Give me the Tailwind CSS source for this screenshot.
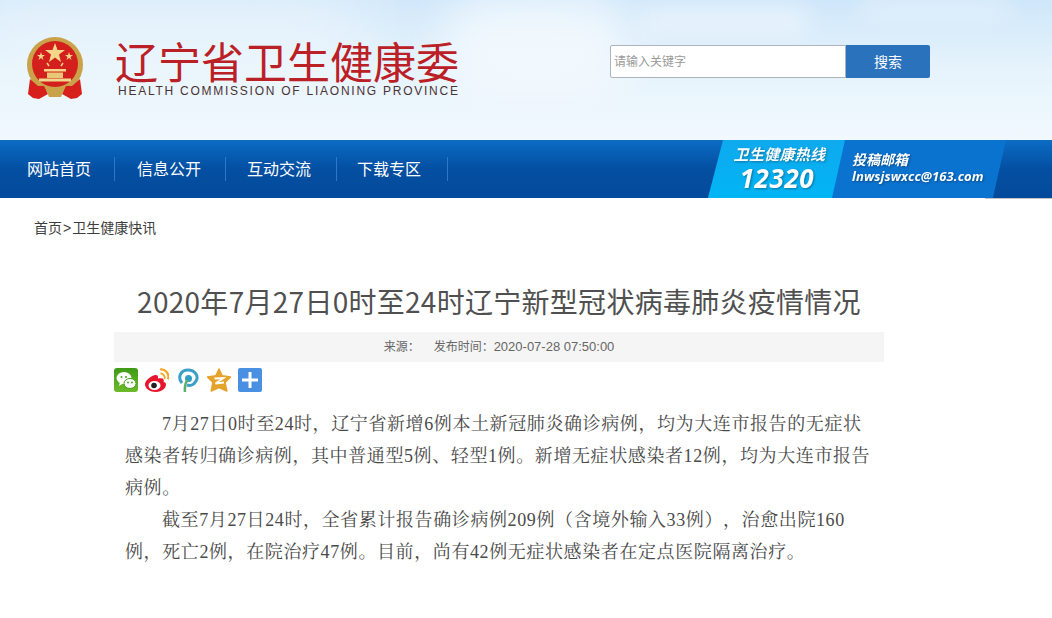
<!DOCTYPE html>
<html lang="zh">
<head>
<meta charset="utf-8">
<script src="https://cdn.jsdelivr.net/npm/@tailwindcss/browser@4"></script>
</head>
<body class="bg-white overflow-hidden font-['Liberation_Sans','Noto_Sans_CJK_SC',sans-serif]">
<div class="w-[1052px] h-[618px] flex flex-col">
  <header class="relative overflow-hidden h-[140px] shrink-0 bg-gradient-to-b from-[#cfe7fa] via-[#e6f3fc] to-[#f1f9fe] flex items-start">
    <div class="absolute left-[-40px] top-[-20px] w-[420px] h-[90px] rounded-full bg-white/45 blur-2xl"></div>
    <div class="absolute left-[440px] top-[-10px] w-[190px] h-[100px] rounded-full bg-white/60 blur-xl"></div>
    <div class="absolute left-[640px] top-[8px] w-[170px] h-[24px] rounded-full bg-white/50 blur-md"></div>
    <div class="absolute left-[860px] top-[0px] w-[150px] h-[18px] rounded-full bg-white/40 blur-md"></div>
    <svg class="relative w-[60px] h-[64px] ml-[25px] mt-[36px] shrink-0" viewBox="0 0 60 64">
      <circle cx="30" cy="29" r="28" fill="#c9a24a"/>
      <circle cx="30" cy="28" r="23" fill="#d3201c"/>
      <polygon points="30,7 32.500,14 40,14 34,18.500 36,26 30,21.500 24,26 26,18.500 20,14 27.500,14" fill="#f3d68a"/>
      <polygon points="16,16 17,19 20,19 17.500,21 18.500,24 16,22 13.500,24 14.500,21 12,19 15,19" fill="#f3d68a"/>
      <polygon points="44,16 45,19 48,19 45.500,21 46.500,24 44,22 41.500,24 42.500,21 40,19 43,19" fill="#f3d68a"/>
      <path d="M22 27 l2 3 M38 27 l-2 3" stroke="#f3d68a" stroke-width="1.500"/>
      <rect x="19" y="33" width="22" height="2.500" fill="#f3d68a"/>
      <rect x="22" y="36.500" width="16" height="5.500" fill="#e8c876"/>
      <rect x="14" y="42.500" width="32" height="3" fill="#f0d78e"/>
      <path d="M5 43 L13 50 L19 50 L23 58 L14 63 L8 62 L3 58 Z" fill="#d7201c"/>
      <path d="M55 43 L47 50 L41 50 L37 58 L46 63 L52 62 L57 58 Z" fill="#d7201c"/>
      <path d="M20 51 H40 L36 61 H24 Z" fill="#c9a24a"/>
    </svg>
    <div class="relative ml-[30px] mt-[37px] w-[346px] shrink-0">
      <div class="text-[43px] leading-[46px] text-[#bb2026] whitespace-nowrap font-['Noto_Sans_CJK_SC',sans-serif]">辽宁省卫生健康委</div>
      <div class="text-[12px] leading-[14px] mt-[1px] ml-[3px] text-[#4a3336] tracking-[1.75px] whitespace-nowrap">HEALTH COMMISSION OF LIAONING PROVINCE</div>
    </div>
    <div class="relative ml-[149px] mt-[45px] flex shrink-0">
      <div class="w-[236px] h-[33px] bg-white border border-[#adb4bc] rounded-l-[2px] text-[12px] leading-[33px] pl-[3px] text-[#9a9a9a]">请输入关键字</div>
      <div class="w-[84px] h-[33px] bg-[#2b72bd] rounded-r-[2px] text-white text-[14px] leading-[34px] text-center">搜索</div>
    </div>
  </header>

  <nav class="h-[58px] shrink-0 bg-gradient-to-b from-[#0c6cc4] via-[#044fa2] to-[#034a9b] relative flex items-center text-white text-[16px]">
    <div class="w-[115px] h-[24px] leading-[26px] border-r border-[#2d78c8] pl-[27px]">网站首页</div>
    <div class="w-[111px] h-[24px] leading-[26px] border-r border-[#2d78c8] pl-[22px]">信息公开</div>
    <div class="w-[111px] h-[24px] leading-[26px] border-r border-[#2d78c8] pl-[21px]">互动交流</div>
    <div class="w-[111px] h-[24px] leading-[26px] border-r border-[#2d78c8] pl-[20px]">下载专区</div>
    <div class="absolute left-[708px] top-0 w-[298px] h-[58px] bg-[#0a73d0] [clip-path:polygon(5%_0,100%_0,95.600%_100%,0_100%)]"></div>
    <div class="absolute left-[708px] top-0 w-[137px] h-[58px] bg-gradient-to-b from-[#0fa9ee] to-[#00b5f5] [clip-path:polygon(11%_0,100%_0,90.500%_100%,0_100%)] flex flex-col items-center pr-[8px] pl-[14px] italic">
      <div class="text-[15px] leading-[18px] mt-[6px] tracking-[.3px] whitespace-nowrap font-bold drop-shadow-[1px_1px_1px_rgba(0,0,0,.35)]">卫生健康热线</div>
      <div class="text-[26px] leading-[29px] -ml-[5px] font-bold tracking-[.6px] font-['Open_Sans',sans-serif] drop-shadow-[1px_1px_1px_rgba(0,0,0,.35)]">12320</div>
    </div>
    <div class="absolute left-[852px] top-[11px] italic font-bold drop-shadow-[1px_1px_1px_rgba(0,0,0,.35)]">
      <div class="text-[14px] leading-[18px]">投稿邮箱</div>
      <div class="text-[13px] leading-[14px] tracking-[.1px] font-['Open_Sans',sans-serif] whitespace-nowrap">lnwsjswxcc@163.com</div>
    </div>
    <div class="absolute left-[985px] top-full w-[67px] h-[1px] bg-[#c4c4c4]"></div>
  </nav>

  <div class="text-[14px] leading-[18px] text-[#3d3d3d] pl-[34px] pt-[21px] whitespace-nowrap">首页<span class="mx-[1px]">&gt;</span>卫生健康快讯</div>

  <main class="w-[770px] ml-[114px] mt-[46px]">
    <h1 class="text-[28px] leading-[36px] tracking-[0.28px] text-[#505050] text-center font-normal font-['Noto_Sans_CJK_SC',sans-serif] whitespace-nowrap">2020年7月27日0时至24时辽宁新型冠状病毒肺炎疫情情况</h1>
    <div class="h-[30px] mt-[13px] bg-[#f5f5f5] text-[12px] leading-[30px] text-[#666] flex justify-center">
      <span class="w-[50px]">来源：</span><span>发布时间：<span class="text-[13px]">2020-07-28 07:50:00</span></span>
    </div>
    <div class="flex items-center gap-[7px] mt-[5px] h-[25px]">
      <svg class="w-[24px] h-[24px]" viewBox="0 0 24 24"><defs><linearGradient id="wx" x1="0" y1="0" x2="0" y2="1"><stop offset="0" stop-color="#3f9a16"/><stop offset="1" stop-color="#6dbb2a"/></linearGradient></defs><rect width="24" height="24" rx="3" fill="url(#wx)"/><ellipse cx="10" cy="10" rx="7.500" ry="6" fill="#fff"/><path d="M6 14 L5 18 L10 15Z" fill="#fff"/><ellipse cx="16" cy="15.500" rx="6" ry="5" fill="#fff" stroke="#46a318"/><circle cx="7.500" cy="9" r="1" fill="#46a318"/><circle cx="12" cy="9" r="1" fill="#46a318"/><circle cx="14" cy="14.500" r=".9" fill="#46a318"/><circle cx="18" cy="14.500" r=".9" fill="#46a318"/></svg>
      <svg class="w-[24px] h-[24px]" viewBox="0 0 24 24"><path d="M10 7 C4 9 0 13 0 16.500 C0 20.500 5 24 11 24 C17 24 21 20 21 16.500 C21 14.500 19 14 18.500 13.500 C19.500 11 18 9.500 13 10.500 C13.500 7.500 12 6.500 10 7Z" fill="#e6162d"/><ellipse cx="9.500" cy="17.500" rx="6" ry="4.500" fill="#fff"/><circle cx="9" cy="17.500" r="2.800" fill="#222"/><path d="M15 1.500 C20 0.500 25 6 23 11.500" fill="none" stroke="#f5a623" stroke-width="2.200"/><path d="M15.500 5.500 C18 5.500 20.500 8 19.500 11" fill="none" stroke="#f5a623" stroke-width="1.800"/></svg>
      <svg class="w-[24px] h-[24px]" viewBox="0 0 24 24"><path d="M6 15 C1 9 5 2 12 2 C19 2 23 8 20 13 C18 17 14 18 11 17" fill="none" stroke="#3aa0c8" stroke-width="3"/><circle cx="12.500" cy="10.500" r="3.500" fill="#2f9fc4"/><path d="M11.500 12 C9 15 8.500 19 9 24" fill="none" stroke="#5fae6e" stroke-width="2.500"/></svg>
      <svg class="w-[24px] h-[24px]" viewBox="0 0 24 24"><path d="M12 1 L15.200 7.800 L23.500 9 L18 14.500 L19.800 23 L12 19.500 L4.200 23 L6 14.500 L0.500 9 L8.800 7.800Z" fill="#e5a32b" stroke="#e5a32b" stroke-linejoin="round" stroke-width="1.500"/><path d="M7.500 10.500 L16.500 10 L8.500 15.500 L17 14.500" fill="none" stroke="#fff" stroke-width="1.800"/></svg>
      <svg class="w-[24px] h-[24px]" viewBox="0 0 24 24"><rect width="24" height="24" rx="2" fill="#4a90e2"/><rect x="4" y="10.500" width="16" height="3" fill="#fff"/><rect x="10.500" y="4" width="3" height="16" fill="#fff"/></svg>
    </div>
    <div class="mt-[16px] pl-[11px] text-[18px] leading-[32px] tracking-[0.6px] text-[#4a4a4a] whitespace-nowrap [text-spacing-trim:space-all] font-['Liberation_Serif','Noto_Serif_CJK_SC','Noto_Sans_CJK_SC',serif]">
      <p class="indent-[37px]">7月27日0时至24时，辽宁省新增6例本土新冠肺炎确诊病例，均为大连市报告的无症状<br>感染者转归确诊病例，其中普通型5例、轻型1例。新增无症状感染者12例，均为大连市报告<br>病例。</p>
      <p class="indent-[37px]">截至7月27日24时，全省累计报告确诊病例209例（含境外输入33例），治愈出院160<br>例，死亡2例，在院治疗47例。目前，尚有42例无症状感染者在定点医院隔离治疗。</p>
    </div>
  </main>
</div>
</body>
</html>
